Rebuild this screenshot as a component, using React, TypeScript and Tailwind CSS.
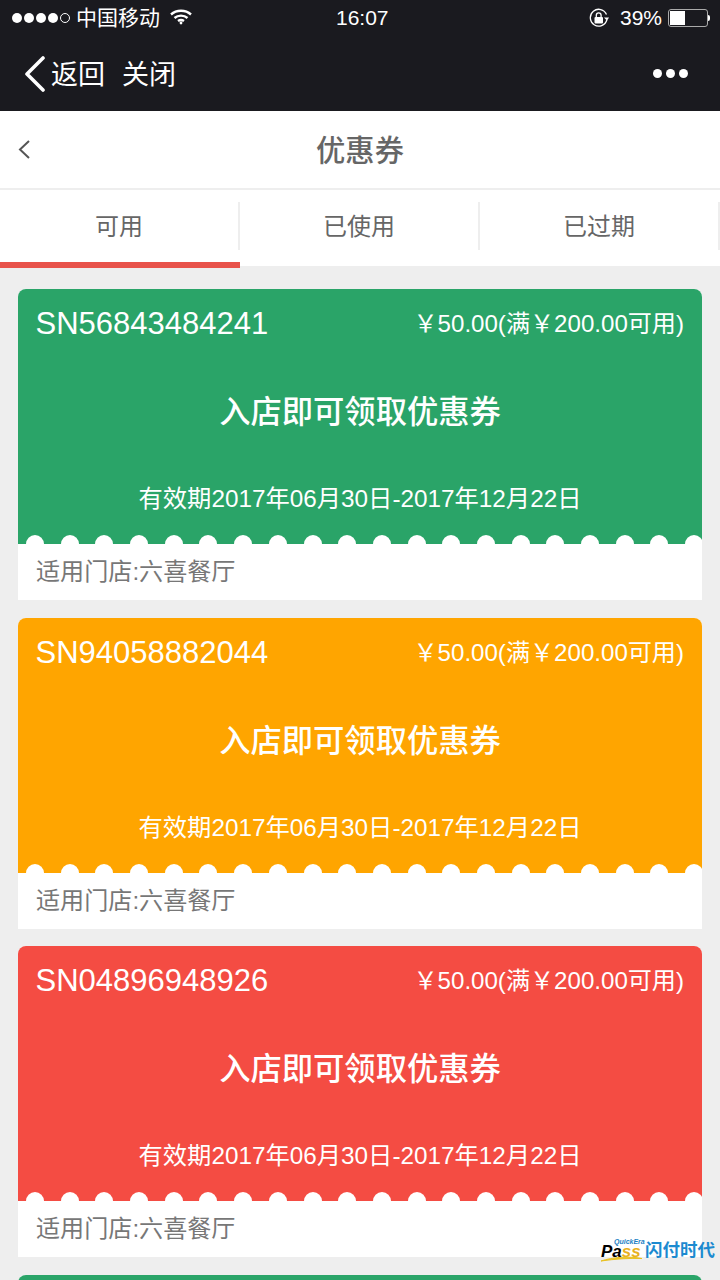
import React from "react";

const font = { fontFamily: '"Liberation Sans", "Noto Sans CJK SC", sans-serif' };

function Coupon({ sn, color }: { sn: string; color: string }) {
  return (
    <div className="mb-[17.67px] w-[684px] overflow-hidden rounded-t-[8px] bg-white">
      <div className={`flex h-[255px] flex-col ${color} text-white`}>
        <div className="flex h-[69px] items-start justify-between pl-[17.5px] pr-[18px] pt-[16px]">
          <span className="text-[31px] leading-[38px]">{sn}</span>
          <span className="pt-[4px] text-[24.1px] leading-[30px]">￥50.00(满￥200.00可用)</span>
        </div>
        <div className="pt-[32px] text-center text-[31.3px] font-medium leading-[46px]">入店即可领取优惠券</div>
        <div className="pt-[46px] text-center text-[24.3px] leading-[34px]">有效期2017年06月30日-2017年12月22日</div>
        <div className="mt-auto flex h-[9px] items-end gap-[16.7px] overflow-hidden pl-[8px]">
          {Array.from({ length: 20 }).map((_, i) => (
            <div key={i} className="h-[9px] w-[18px] shrink-0 rounded-t-full bg-white" />
          ))}
        </div>
      </div>
      <div className="flex h-[56px] items-center pl-[18px] text-[24.1px] text-[#777]">适用门店:六喜餐厅</div>
    </div>
  );
}

export default function App() {
  return (
    <div className="relative h-[1280px] w-[720px] overflow-hidden bg-[#eeeeee]" style={font}>
      <div className="h-[111px] bg-[#1a1a1f] text-white">
        <div className="relative flex h-[36px] items-center pl-[12px] pr-[10px]">
          <div className="flex items-center gap-[2px]">
            {[0, 1, 2, 3].map((i) => (
              <div key={i} className="h-[10px] w-[10px] rounded-full bg-white" />
            ))}
            <div className="h-[10px] w-[10px] rounded-full border border-white" />
          </div>
          <span className="ml-[6px] text-[21px] leading-[24px]">中国移动</span>
          <svg className="ml-[10px] -mt-[2px]" width="22" height="16" viewBox="0 0 22 16" fill="none" stroke="white" strokeWidth="2.4">
            <path d="M1 5.5C6.5 0.5 15.5 0.5 21 5.5" />
            <path d="M4.5 9C8 5.8 14 5.8 17.5 9" />
            <path d="M8 12C9.7 10.8 12.3 10.8 14 12" />
            <circle cx="11" cy="14" r="1.4" fill="white" stroke="none" />
          </svg>
          <span className="absolute left-[336px] text-[21px] font-medium leading-[24px]">16:07</span>
          <div className="ml-auto flex items-center">
            <svg className="-ml-[2px]" width="20" height="20" viewBox="0 0 20 20" fill="none">
              <path d="M17.8 12A8.4 8.4 0 1 1 17.5 6.5" stroke="white" strokeWidth="1.3" />
              <path d="M15 9.5L18 12.8L20 9.5Z" fill="white" />
              <rect x="5.5" y="9" width="8.5" height="6.5" rx="1" fill="white" />
              <path d="M7.3 9V7.3a2.4 2.4 0 0 1 4.8 0V9" stroke="white" strokeWidth="1.3" />
            </svg>
            <span className="ml-[11px] text-[21px] leading-[24px]">39%</span>
            <div className="ml-[6px] flex items-center">
              <div className="h-[18px] w-[40px] rounded-[3px] border border-[#aaaaaa] p-[1px]">
                <div className="h-full w-[15px] bg-white" />
              </div>
              <div className="h-[6px] w-[2px] rounded-r-full bg-white" />
            </div>
          </div>
        </div>
        <div className="flex h-[75px] items-center pl-[24px] pr-[32px]">
          <svg width="22" height="36" viewBox="0 0 22 36" fill="none" stroke="white" strokeWidth="3.6" strokeLinecap="round" strokeLinejoin="round">
            <path d="M19 2L3 18L19 34" />
          </svg>
          <span className="ml-[5px] mt-[2px] text-[27px] leading-[32px]">返回</span>
          <span className="ml-[17px] mt-[2px] text-[27px] leading-[32px]">关闭</span>
          <div className="ml-auto flex gap-[4px]">
            <div className="h-[9px] w-[9px] rounded-full bg-white" />
            <div className="h-[9px] w-[9px] rounded-full bg-white" />
            <div className="h-[9px] w-[9px] rounded-full bg-white" />
          </div>
        </div>
      </div>

      <div className="relative flex h-[77px] items-center justify-center bg-white">
        <svg className="absolute left-[18px] top-[29px]" width="12" height="19" viewBox="0 0 12 19" fill="none" stroke="#555555" strokeWidth="2">
          <path d="M11 1L2 9.5L11 18" />
        </svg>
        <span className="pt-[3px] text-[29.3px] font-medium text-[#666]">优惠券</span>
      </div>
      <div className="h-[2px] bg-[#eeeeee]" />
      <div className="flex h-[78px] text-[24px] text-[#666]">
        {["可用", "已使用", "已过期"].map((t, i) => (
          <div key={t} className={`w-[240px] bg-white ${i === 0 ? "h-[78px] border-b-[6px] border-[#e8524a]" : "h-[76px]"}`}>
            <div className="mt-[12px] flex h-[48px] w-full items-center justify-center border-r-2 border-[#eeeeee] pt-[2px]">{t}</div>
          </div>
        ))}
      </div>

      <div className="flex flex-col items-center pt-[21px]">
        <Coupon sn="SN56843484241" color="bg-[#2aa468]" />
        <Coupon sn="SN94058882044" color="bg-[#ffa500]" />
        <Coupon sn="SN04896948926" color="bg-[#f44c43]" />
        <Coupon sn="SN56843484241" color="bg-[#2aa468]" />
      </div>

      <div className="absolute left-[601px] top-[1239px] flex h-[24px] items-start whitespace-nowrap">
        <div className="relative h-[24px] w-[44px]">
          <span className="absolute left-[13px] top-0 text-[7px] font-bold italic leading-[6px] text-[#1c7fc4]">QuickEra</span>
          <span className="absolute left-0 top-[6px] text-[17px] font-bold italic leading-[14px] text-black">Pa<span className="text-[#e8b020]">ss</span></span>
          <svg className="absolute left-0 top-[17px]" width="42" height="6" viewBox="0 0 42 6" fill="none">
            <path d="M0 5C12 1 28 0 41 2.5C28 2 14 3 0 5Z" fill="#e8c020" stroke="#e8c020" strokeWidth="1" />
          </svg>
        </div>
        <span className="text-[17.5px] font-bold leading-[22px] text-[#1c8ad0]">闪付时代</span>
      </div>
    </div>
  );
}
